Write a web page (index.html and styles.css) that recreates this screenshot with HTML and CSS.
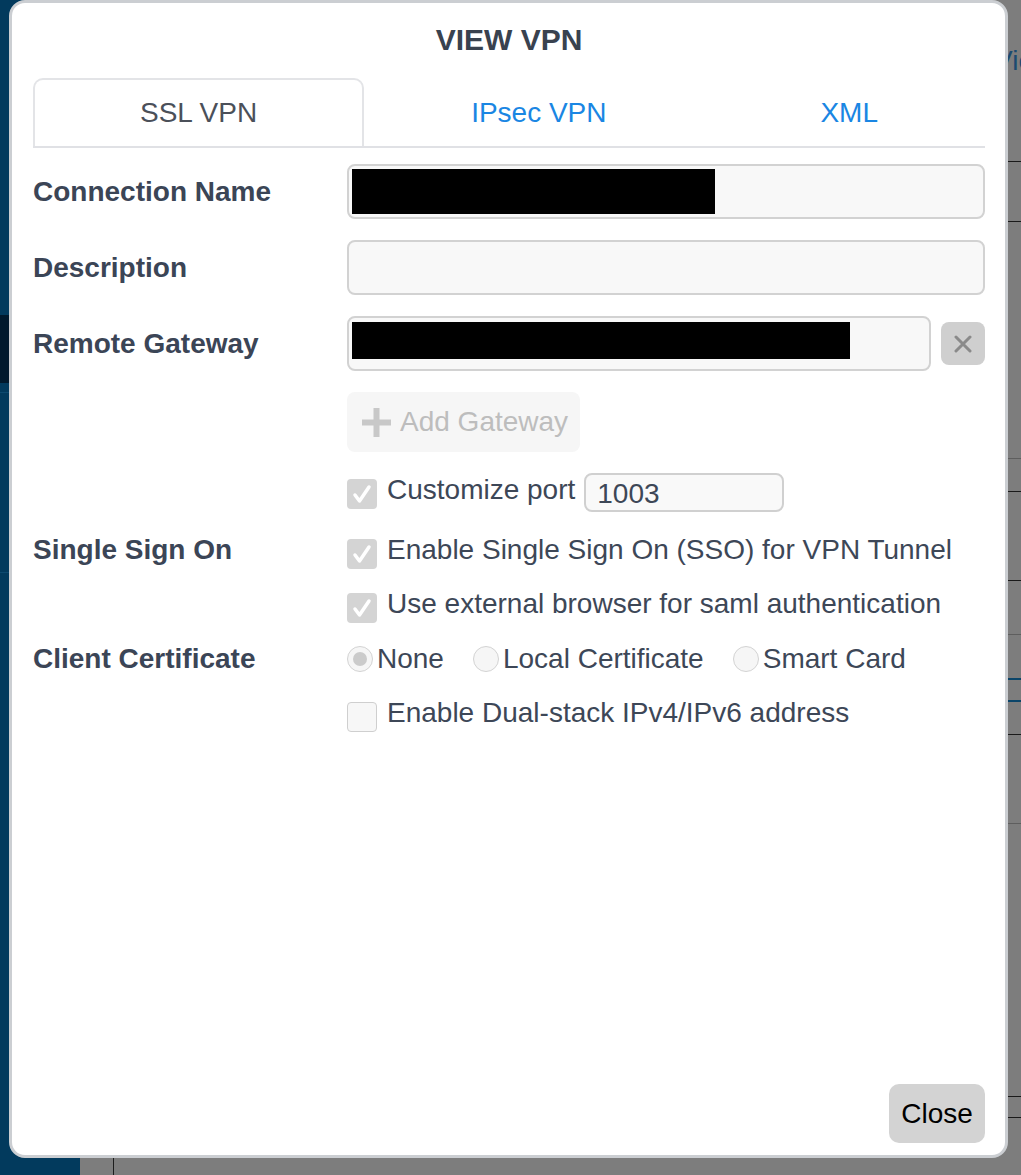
FILE: index.html
```html
<!DOCTYPE html>
<html lang="en">
<head>
    <meta charset="UTF-8">
    <meta name="viewport" content="width=device-width, initial-scale=1.0">
    <title>View VPN</title>
    <link rel="stylesheet" href="styles.css">
</head>
<body>
    <div class="page">
        <div class="sidebar">
            <div class="nav-spacer"></div>
            <div class="nav-item active"></div>
            <div class="nav-item short"></div>
            <div class="nav-item tall"></div>
        </div>
        <div class="main">
            <div class="panel">
                <div class="panel-title">View</div>
                <div class="bg-row" style="height: 60px"></div>
                <div class="bg-row light" style="height: 237px"></div>
                <div class="bg-row" style="height: 33px"></div>
                <div class="bg-row" style="height: 89px"></div>
                <div class="bg-row light" style="height: 54px"></div>
                <div class="bg-row blue" style="height: 45px"></div>
                <div class="bg-row blue" style="height: 22px"></div>
                <div class="bg-row" style="height: 33px"></div>
                <div class="bg-row light" style="height: 89px"></div>
                <div class="bg-row" style="height: 273px"></div>
                <div class="bg-row" style="height: 21px"></div>
            </div>
        </div>
    </div>

    <div class="modal">
        <h2 class="modal-title">VIEW VPN</h2>

        <div class="tabs">
            <div class="tab active">SSL VPN</div>
            <div class="tab">IPsec VPN</div>
            <div class="tab">XML</div>
        </div>

        <div class="form">
            <div class="field-row">
                <label>Connection Name</label>
                <div class="text-field"><span class="redacted" style="width: 363px; height: 45px"></span></div>
            </div>

            <div class="field-row">
                <label>Description</label>
                <div class="text-field"></div>
            </div>

            <div class="field-row">
                <label>Remote Gateway</label>
                <div class="gateway">
                    <div class="text-field top"><span class="redacted" style="width: 498px; height: 37px"></span></div>
                    <div class="remove-btn">
                        <svg width="18" height="18" viewBox="0 0 18 18"><path d="M2 2 L16 16 M16 2 L2 16" stroke="#8a8a8a" stroke-width="3" stroke-linecap="round"/></svg>
                    </div>
                </div>
            </div>

            <div class="field-row">
                <span></span>
                <div>
                    <div class="add-btn">
                        <svg width="31" height="31" viewBox="0 0 31 31"><path d="M15.5 1 V30 M1 15.5 H30" stroke="#c8c8c8" stroke-width="6"/></svg>
                        Add Gateway
                    </div>
                </div>
            </div>

            <div class="field-row">
                <span></span>
                <div class="option port-row">
                    <span class="checkbox checked">
                        <svg width="30" height="30" viewBox="0 0 30 30"><path d="M8 16 L12.5 22 L22 8" fill="none" stroke="#fff" stroke-width="3.5" stroke-linecap="round" stroke-linejoin="round"/></svg>
                    </span>
                    <span>Customize port</span>
                    <div class="port-field">1003</div>
                </div>
            </div>

            <div class="field-row group">
                <label>Single Sign On</label>
                <div class="options">
                    <div class="option">
                        <span class="checkbox checked">
                            <svg width="30" height="30" viewBox="0 0 30 30"><path d="M8 16 L12.5 22 L22 8" fill="none" stroke="#fff" stroke-width="3.5" stroke-linecap="round" stroke-linejoin="round"/></svg>
                        </span>
                        <span>Enable Single Sign On (SSO) for VPN Tunnel</span>
                    </div>
                    <div class="option">
                        <span class="checkbox checked">
                            <svg width="30" height="30" viewBox="0 0 30 30"><path d="M8 16 L12.5 22 L22 8" fill="none" stroke="#fff" stroke-width="3.5" stroke-linecap="round" stroke-linejoin="round"/></svg>
                        </span>
                        <span>Use external browser for saml authentication</span>
                    </div>
                </div>
            </div>

            <div class="field-row group">
                <label>Client Certificate</label>
                <div class="options">
                    <div class="option radios">
                        <span class="radio-item"><span class="radio selected"></span>None</span>
                        <span class="radio-item"><span class="radio"></span>Local Certificate</span>
                        <span class="radio-item"><span class="radio"></span>Smart Card</span>
                    </div>
                    <div class="option">
                        <span class="checkbox"></span>
                        <span>Enable Dual-stack IPv4/IPv6 address</span>
                    </div>
                </div>
            </div>
        </div>

        <div class="modal-footer">
            <button class="close-btn">Close</button>
        </div>
    </div>
</body>
</html>
```

FILE: styles.css
```css
body {
    margin: 0;
    font-family: "Liberation Sans", Arial, sans-serif;
    background-color: #7c7c7c;
    overflow: hidden;
}
.page {
    display: flex;
    height: 1175px;
}
.sidebar {
    width: 80px;
    flex-shrink: 0;
    background-color: #023a5d;
}
.nav-spacer {
    height: 315px;
}
.nav-item {
    border-bottom: 1px solid #0d4a70;
}
.nav-item.active {
    height: 68px;
    background-color: #01192d;
    border-bottom: none;
}
.nav-item.short {
    height: 9px;
}
.nav-item.tall {
    height: 179px;
}
.main {
    flex: 1;
    min-width: 0;
    display: flex;
    overflow: hidden;
    background-color: #7d7d7d;
}
.panel {
    margin-left: 33px;
    flex: 1;
    min-width: 0;
    border-left: 1px solid #1d1d1d;
}
.panel-title {
    height: 162px;
    padding-left: 880px;
    padding-top: 44px;
    box-sizing: border-box;
    font-size: 28px;
    line-height: 34px;
    white-space: nowrap;
    color: #1b4a70;
    border-bottom: 1px solid #1a1a1a;
}
.bg-row {
    box-sizing: border-box;
    border-bottom: 1px solid #1a1a1a;
}
.bg-row.light {
    border-bottom-color: #5e5e5e;
}
.bg-row.blue {
    border-bottom: 2px solid #0b4569;
}

/* modal */
.modal {
    position: absolute;
    left: 9px;
    top: 0;
    width: 999px;
    height: 1158px;
    box-sizing: border-box;
    background-color: #fff;
    border: 3px solid #cbced2;
    border-radius: 16px;
    padding: 20px 20px 12px 21px;
    display: flex;
    flex-direction: column;
}
.modal-title {
    margin: 0;
    text-align: center;
    font-size: 30px;
    line-height: 34px;
    color: #39424f;
}
.tabs {
    display: flex;
    margin-top: 21px;
    border-bottom: 2px solid #e0e1e5;
}
.tab {
    flex: 1 1 auto;
    text-align: center;
    height: 68px;
    line-height: 66px;
    font-size: 28px;
    color: #1a86e3;
    border: 2px solid transparent;
    border-bottom: none;
    box-sizing: border-box;
}
.tab.active {
    color: #4b5059;
    border-color: #e3e4e7;
    border-radius: 10px 10px 0 0;
}
.form {
    display: flex;
    flex-direction: column;
    gap: 21px;
    margin-top: 16px;
}
.field-row {
    display: grid;
    grid-template-columns: 314px 1fr;
    align-items: center;
}
.field-row.group {
    align-items: start;
}
.field-row label {
    font-size: 28px;
    line-height: 34px;
    font-weight: bold;
    color: #3b4556;
}
.text-field {
    height: 55px;
    box-sizing: border-box;
    border: 2px solid #d2d2d2;
    border-radius: 8px;
    background-color: #f8f8f8;
    padding: 3px;
    display: flex;
    align-items: center;
}
.text-field.top {
    align-items: flex-start;
    padding-top: 4px;
    flex: 1;
}
.redacted {
    display: block;
    background-color: #000;
}
.gateway {
    display: flex;
    align-items: center;
    gap: 10px;
}
.remove-btn {
    width: 44px;
    height: 43px;
    border-radius: 8px;
    background-color: #cfcfcf;
    display: flex;
    align-items: center;
    justify-content: center;
}
.add-btn {
    display: inline-flex;
    align-items: center;
    gap: 8px;
    height: 60px;
    padding: 0 12px 0 14px;
    border-radius: 8px;
    background-color: #f6f6f6;
    font-size: 28px;
    color: #bdbdbd;
}
.options {
    display: flex;
    flex-direction: column;
    gap: 20px;
}
.option {
    display: flex;
    align-items: flex-start;
    height: 34px;
    font-size: 28px;
    line-height: 34px;
    color: #3d4757;
}
.option.port-row {
    height: 39px;
}
.checkbox {
    width: 30px;
    height: 30px;
    box-sizing: border-box;
    border-radius: 4px;
    border: 1.5px solid #cfcfcf;
    background-color: #f7f7f7;
    margin: 6px 10px 0 0;
    flex-shrink: 0;
}
.checkbox.checked {
    border: none;
    background-color: #d4d4d4;
}
.checkbox svg {
    display: block;
}
.port-field {
    width: 200px;
    height: 39px;
    box-sizing: border-box;
    margin-left: 9px;
    border: 2px solid #d0d0d0;
    border-radius: 8px;
    background-color: #f9f9f9;
    padding-left: 11px;
    line-height: 38px;
}
.radios {
    gap: 29px;
}
.radio-item {
    display: flex;
    align-items: center;
}
.radio {
    width: 26px;
    height: 26px;
    box-sizing: border-box;
    border-radius: 50%;
    border: 1.5px solid #d3d3d3;
    background-color: #f6f6f6;
    margin-right: 4px;
    display: flex;
    align-items: center;
    justify-content: center;
}
.radio.selected::after {
    content: "";
    width: 14px;
    height: 14px;
    border-radius: 50%;
    background-color: #cbcbcb;
}
.modal-footer {
    margin-top: auto;
    display: flex;
    justify-content: flex-end;
}
.close-btn {
    font-family: "Liberation Sans", Arial, sans-serif;
    font-size: 28px;
    color: #000;
    width: 96px;
    height: 59px;
    border: none;
    border-radius: 10px;
    background-color: #d3d3d3;
}
```
